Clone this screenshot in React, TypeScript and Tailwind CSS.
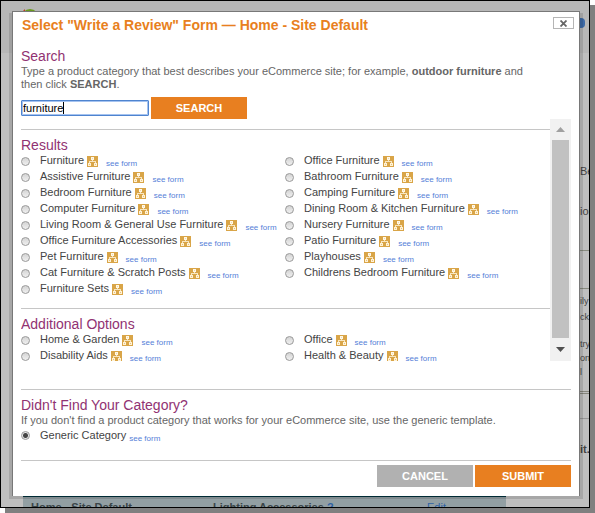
import { useState } from "react";

const results: string[] = [
  "Furniture", "Office Furniture",
  "Assistive Furniture", "Bathroom Furniture",
  "Bedroom Furniture", "Camping Furniture",
  "Computer Furniture", "Dining Room & Kitchen Furniture",
  "Living Room & General Use Furniture", "Nursery Furniture",
  "Office Furniture Accessories", "Patio Furniture",
  "Pet Furniture", "Playhouses",
  "Cat Furniture & Scratch Posts", "Childrens Bedroom Furniture",
  "Furniture Sets",
];

const additional: string[] = ["Home & Garden", "Office", "Disability Aids", "Health & Beauty"];

function TreeIcon() {
  return (
    <svg className="mt-px ml-[3px] h-[11px] w-[11px] shrink-0" viewBox="0 0 11 11" aria-hidden="true">
      <rect width="11" height="11" fill="#d9a548" />
      <path d="M4 1h3v3H4z" fill="#fff8e8" />
      <path d="M5 4h1v1h3v2H8V6H3v1H2V5h3z" fill="#f8e6c0" />
      <path d="M1 7h3v3H1zM7 7h3v3H7z" fill="#fff2d6" />
      <path d="M2 8h1v1H2zM8 8h1v1H8z" fill="#e8c27c" />
      <path d="M5 2h1v1H5z" fill="#f3dba8" />
    </svg>
  );
}

interface OptionProps {
  label: string;
  selected: string;
  onSelect: (label: string) => void;
  tree?: boolean;
}

function Option({ label, selected, onSelect, tree = true }: OptionProps) {
  return (
    <div className="flex h-4 items-center whitespace-nowrap">
      <label className="flex items-center text-[#444]">
        <input
          type="radio"
          name="category"
          checked={selected === label}
          onChange={() => onSelect(label)}
          className="mt-px mr-2.5 h-[9px] w-[9px] shrink-0 appearance-none rounded-full border border-[#999] bg-linear-to-b from-[#d4d4d4] to-[#f0f0f0] checked:bg-[radial-gradient(circle,#444_0_2px,#e6e6e6_3px)]"
        />
        <span className={tree ? "pb-0.5" : ""}>{label}</span>
      </label>
      {tree && <TreeIcon />}
      <a href="#form" className={`text-[8px] leading-[8px] text-[#5580d8] ${tree ? "mt-1.5 ml-2" : "mt-2 ml-[3px]"}`}>
        see form
      </a>
    </div>
  );
}

function Heading({ children }: { children: string }) {
  return <h2 className="text-[14px] leading-[18px] text-[#913272]">{children}</h2>;
}

function PageBehind() {
  return (
    <div className="absolute inset-0 flex flex-col overflow-hidden bg-[#bfbfbf] text-[#444]" aria-hidden="true">
      <div className="flex h-13 shrink-0 items-start justify-between bg-[#b7b7b7] pl-5">
        <svg className="mt-2 h-4 w-[18px]" viewBox="0 0 18 16">
          <circle cx="9" cy="9" r="9" fill="#6b9a1e" />
          <path d="M1 3h3V0z" fill="#c23b22" />
        </svg>
        <div className="mt-[17px] mr-1 h-[10px] w-[9px] rounded-r-sm bg-[#3d6aa8]" />
      </div>
      <div className="ml-auto flex w-[9px] grow flex-col whitespace-nowrap text-[11px] leading-4">
        <div className="mt-[110px]">Be</div>
        <div className="mt-6">ion</div>
        <div className="mt-[31px] h-[39px] border-y border-[#888b80]" />
        <div className="mt-1 text-[9px]">ily</div>
        <div className="text-[9px]">ck</div>
        <div className="mt-3 text-[9px] leading-[14px]">try<br />one<br />l</div>
        <div className="mt-3 h-[3px] border-y border-[#85857c]" />
        <div className="mt-6 border-t border-[#999]" />
        <div className="mt-[22px] font-bold">it.</div>
      </div>
      <div className="mr-[83px] ml-[22px] h-[11px] shrink-0 border-t border-[#00303c] bg-[#929fa3]">
        <div className="grid grid-cols-[182px_214px_1fr] pt-1 pl-2 text-[11px] leading-[13px] font-bold text-[#3a4548]">
          <span>Home - Site Default</span>
          <span>Lighting Accessories <span className="text-[#2f62a4]">?</span></span>
          <span className="font-normal text-[#2f62a4]">Edit</span>
        </div>
      </div>
    </div>
  );
}

export default function App() {
  const [query, setQuery] = useState("furniture");
  const [selected, setSelected] = useState("Generic Category");

  return (
    <div className="min-h-screen bg-white pr-[5px] pb-[5px] font-['Liberation_Sans',Arial,sans-serif] text-[11px] leading-[13px] text-[#666]">
      <div className="relative border border-black shadow-[5px_5px_0_#808080]">
        <PageBehind />
        <div className="relative mx-[6px] ml-2 mt-3 mb-2 bg-black/12 px-[3px] pb-[3px]">
          <main role="dialog" aria-labelledby="title" className="relative -top-[2px] -mb-[2px] border border-b-0 border-[#787878] bg-white px-2 pb-[9px]">
            <header className="-mr-[3px] flex items-start justify-between pt-1">
              <h1 id="title" className="pl-px text-[14px] leading-[18px] font-bold text-[#e87f20]">
                Select "Write a Review" Form — Home - Site Default
              </h1>
              <button type="button" aria-label="Close" className="mt-px flex h-3 w-[21px] items-center justify-center border border-[#b5b5b5]">
                <svg className="h-[7px] w-[7px]" viewBox="0 0 7 7">
                  <path d="M.5.5l6 6M6.5.5l-6 6" stroke="#666" strokeWidth="1.8" />
                </svg>
              </button>
            </header>

            <section className="pt-[13px]">
              <Heading>Search</Heading>
              <p className="pr-6">
                Type a product category that best describes your eCommerce site; for example,{" "}
                <b>outdoor furniture</b> and then click <b>SEARCH</b>.
              </p>
              <form className="mt-1.5 flex items-center gap-[2px]" onSubmit={(e) => e.preventDefault()}>
                <div className="relative">
                  <input
                    type="text"
                    aria-label="Product category"
                    value={query}
                    onChange={(e) => setQuery(e.target.value)}
                    className="block h-4 w-32 rounded-[1px] border border-[#4f84cf] px-px text-black caret-transparent shadow-[inset_0_0_0_1px_#a5c3f0] outline-none"
                  />
                  <span className="absolute top-[2px] left-[42px] h-3 w-px bg-black" />
                </div>
                <button type="submit" className="h-[22px] w-24 bg-[#e87f20] font-bold text-white">SEARCH</button>
              </form>
            </section>

            <div className="flex h-[242px]">
              <div className="min-w-0 grow overflow-hidden pt-[10px]">
                <section className="border-t border-[#c6c6c6] pt-[6px]">
                  <Heading>Results</Heading>
                  <div className="-mt-px grid grid-cols-[264fr_265fr]">
                    {results.map((r) => (
                      <Option key={r} label={r} selected={selected} onSelect={setSelected} />
                    ))}
                  </div>
                </section>
                <section className="mt-[11px] border-t border-[#c6c6c6] pt-[6px]">
                  <Heading>Additional Options</Heading>
                  <div className="-mt-px grid grid-cols-[264fr_265fr]">
                    {additional.map((a) => (
                      <Option key={a} label={a} selected={selected} onSelect={setSelected} />
                    ))}
                  </div>
                </section>
              </div>
              <div className="flex w-[21px] shrink-0 flex-col bg-[#f1f1f1] px-[2px]">
                <button type="button" aria-label="Scroll up" className="flex h-[21px] items-center justify-center">
                  <svg className="h-[5px] w-[9px]" viewBox="0 0 9 5"><path d="M0 5L4.500 0L9 5z" fill="#a0a0a0" /></svg>
                </button>
                <div className="grow bg-[#c1c1c1]" />
                <button type="button" aria-label="Scroll down" className="flex h-[23px] items-center justify-center">
                  <svg className="h-[5px] w-[9px]" viewBox="0 0 9 5"><path d="M0 0L4.500 5L9 0z" fill="#505050" /></svg>
                </button>
              </div>
            </div>

            <section className="mt-7 border-y border-[#c6c6c6] pt-[6px] pb-[17px]">
              <Heading>Didn't Find Your Category?</Heading>
              <p>If you don't find a product category that works for your eCommerce site, use the generic template.</p>
              <Option label="Generic Category" selected={selected} onSelect={setSelected} tree={false} />
            </section>

            <footer className="flex justify-end gap-[2px] pt-1">
              <button type="button" className="h-[22px] w-24 bg-[#b1b1b1] font-bold text-white">CANCEL</button>
              <button type="button" className="h-[22px] w-24 bg-[#e87f20] font-bold text-white">SUBMIT</button>
            </footer>
          </main>
        </div>
      </div>
    </div>
  );
}
